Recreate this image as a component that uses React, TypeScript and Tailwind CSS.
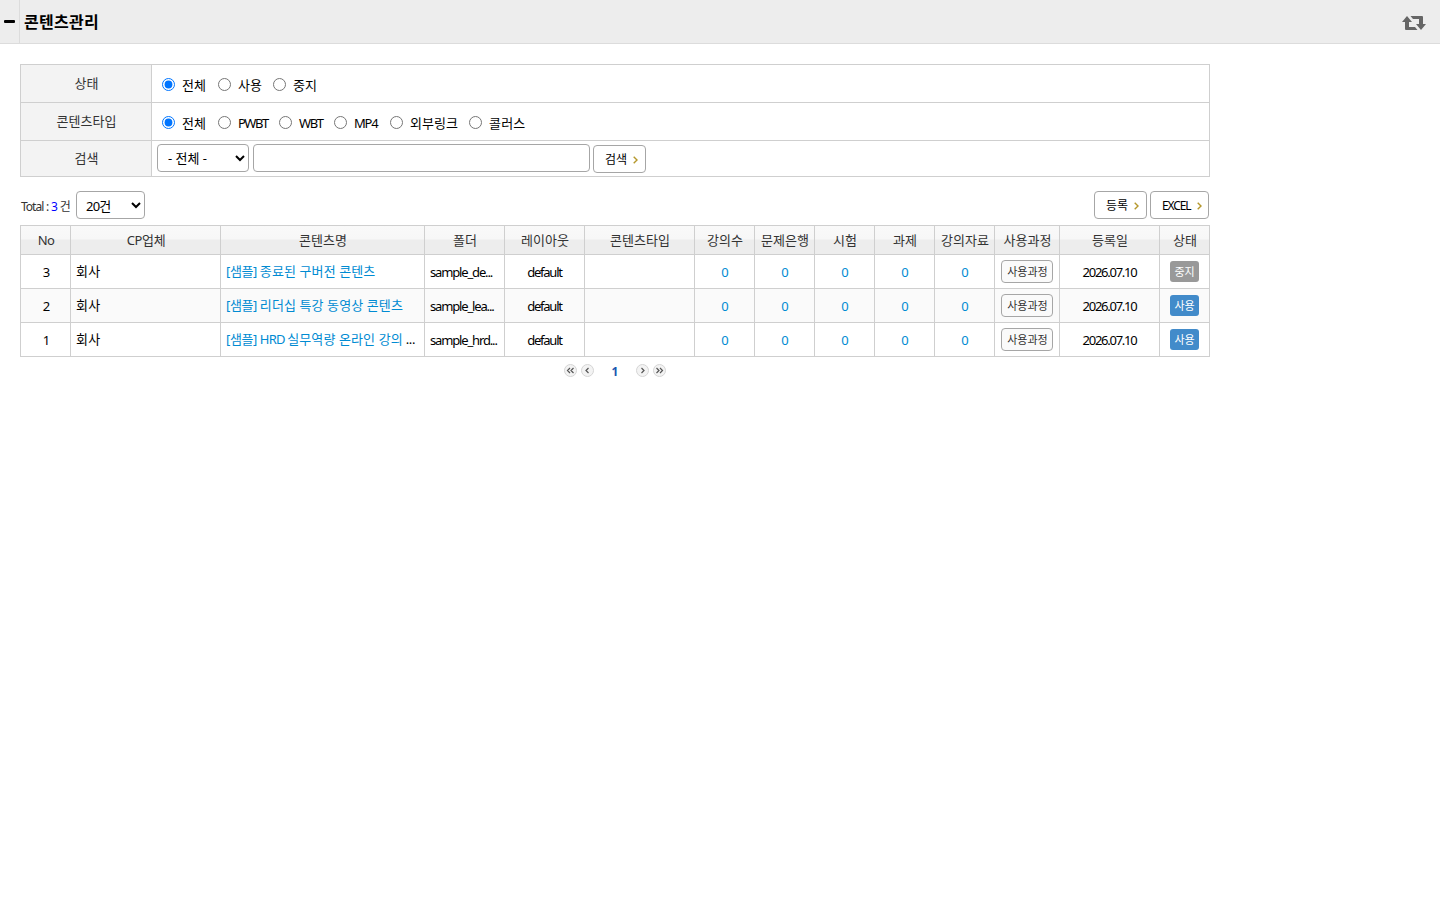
import React from "react";

type Option = { label: string; style: string };

const statusOptions: Option[] = [
  { label: "전체", style: "w-[56px]" },
  { label: "사용", style: "w-[55px]" },
  { label: "중지", style: "w-[55px]" },
];

const typeOptions: Option[] = [
  { label: "전체", style: "w-[56px]" },
  { label: "PWBT", style: "w-[61px] tracking-[-1.5px]" },
  { label: "WBT", style: "w-[55px] tracking-[-1.4px]" },
  { label: "MP4", style: "w-[56px] tracking-[-1.2px]" },
  { label: "외부링크", style: "w-[79px]" },
  { label: "콜러스", style: "w-[70px] tracking-[0.2px]" },
];

const columns = [
  { label: "No", width: "w-[50px] tracking-[-0.5px]" },
  { label: "CP업체", width: "w-[150px] tracking-[-0.4px]" },
  { label: "콘텐츠명", width: "w-[204px]" },
  { label: "폴더", width: "w-[80px]" },
  { label: "레이아웃", width: "w-[80px]" },
  { label: "콘텐츠타입", width: "w-[110px]" },
  { label: "강의수", width: "w-[60px]" },
  { label: "문제은행", width: "w-[60px]" },
  { label: "시험", width: "w-[60px]" },
  { label: "과제", width: "w-[60px]" },
  { label: "강의자료", width: "w-[60px]" },
  { label: "사용과정", width: "w-[65px]" },
  { label: "등록일", width: "w-[100px]" },
  { label: "상태", width: "w-[50px]" },
];

const rows = [
  { no: 3, prefix: "", title: "종료된 구버전 콘텐츠", cut: false, folder: "sample_de...", active: false },
  { no: 2, prefix: "", title: "리더십 특강 동영상 콘텐츠", cut: false, folder: "sample_lea...", active: true },
  { no: 1, prefix: "HRD ", title: "실무역량 온라인 강의", cut: true, folder: "sample_hrd...", active: true },
];

function RadioRow({ name, options }: { name: string; options: Option[] }) {
  return (
    <div className="flex items-center pt-[2px] pl-[10px]">
      {options.map((o, i) => (
        <label key={o.label} className={`flex items-center whitespace-nowrap ${o.style}`}>
          <input type="radio" name={name} defaultChecked={i === 0} className="mr-[7px] size-[13px] shrink-0" />
          {o.label}
        </label>
      ))}
    </div>
  );
}

function FilterRow({ label, height, children }: { label: string; height: string; children: React.ReactNode }) {
  return (
    <div className={`flex border-b border-[#cfcfcf] ${height}`}>
      <div className="flex w-[131px] items-center justify-center border-r border-[#cfcfcf] bg-[#f3f3f3] pb-[2px] pl-px text-[#333]">
        {label}
      </div>
      {children}
    </div>
  );
}

function ArrowButton({ label, style }: { label: string; style: string }) {
  return (
    <button className={`flex h-[28px] items-center rounded-[4px] border border-[#a6a6a6] bg-white pl-[11px] text-[12px] ${style}`}>
      <span className="pt-[2px]">{label}</span>
      <svg className="mt-px ml-[6px] h-[8px] w-[5px]" viewBox="0 0 5 8" fill="none" stroke="#b5982c" strokeWidth="1.4">
        <path d="M0.7 0.7L4 4L0.7 7.3" />
      </svg>
    </button>
  );
}

function PageIcon({ d }: { d: string }) {
  return (
    <svg className="size-[13px]" viewBox="0 0 13 13" fill="none">
      <circle cx="6.5" cy="6.5" r="6" fill="#f3f3f3" stroke="#d4d4d4" />
      <path d={d} stroke="#555" strokeWidth="1.2" />
    </svg>
  );
}

const cell = "flex shrink-0 items-center border-r border-[#cfcfcf]";

export default function App() {
  return (
    <div className="h-[900px] w-[1440px] overflow-hidden bg-white font-['Noto_Sans','Noto_Sans_CJK_KR',sans-serif] text-[13px] leading-[18px] text-black">
      <header className="flex h-[44px] border-b border-[#dcdcdc] bg-[#ededed]">
        <div className="flex w-[20px] border-r border-[#dcdcdc] pt-[20px] pl-[4px]">
          <div className="h-[3px] w-[11px] rounded-[1px] bg-black" />
        </div>
        <h1 className="flex items-center pl-[4px] text-[16px] font-bold tracking-[0.3px]">콘텐츠관리</h1>
        <svg className="mt-[16px] mr-[14px] ml-auto h-[14px] w-[24px]" viewBox="0 0 24 14" fill="#666">
          <path d="M5 0L10 6H7V11H13L15.5 14H4Q3 14 3 13V6H0Z" />
          <path d="M19 14L14 8H17V3H11L8.500 0H20Q21 0 21 1V8H24Z" />
        </svg>
      </header>

      <main className="ml-[20px] w-[1190px] pt-[20px]">
        <section className="border-x border-t border-[#cfcfcf]">
          <FilterRow label="상태" height="h-[38px]">
            <RadioRow name="status" options={statusOptions} />
          </FilterRow>
          <FilterRow label="콘텐츠타입" height="h-[38px]">
            <RadioRow name="type" options={typeOptions} />
          </FilterRow>
          <FilterRow label="검색" height="h-[36px]">
            <div className="flex items-start pt-[3px] pl-[5px]">
              <select className="h-[28px] w-[92px] rounded-[4px] border border-[#a6a6a6] bg-white pl-[6px]">
                <option>- 전체 -</option>
              </select>
              <input className="ml-[4px] h-[28px] w-[337px] rounded-[4px] border border-[#a6a6a6] px-2" />
              <div className="pt-px pl-[3px]">
                <ArrowButton label="검색" style="w-[53px]" />
              </div>
            </div>
          </FilterRow>
        </section>

        <div className="mt-[14px] flex h-[34px] items-start">
          <div className="mt-[7px] ml-px w-[55px] text-[12px] tracking-[-1px] whitespace-nowrap text-[#333] [word-spacing:0.7px]">
            Total : <span className="text-[#0000ff]">3</span> 건
          </div>
          <select className="h-[28px] w-[69px] rounded-[4px] border border-[#a6a6a6] bg-white pt-px pl-[5px] tracking-[-0.8px]">
            <option>20건</option>
          </select>
          <div className="mr-px ml-auto flex gap-[3px]">
            <ArrowButton label="등록" style="w-[53px]" />
            <ArrowButton label="EXCEL" style="w-[59px] tracking-[-1.1px]" />
          </div>
        </div>

        <section className="border-t border-l border-[#cfcfcf]">
          <div className="flex h-[29px] border-b border-[#cfcfcf] bg-[linear-gradient(#f9f9f9_0,#f7f7f7_13px,#ededed_14px,#ededed_100%)] text-[#333]">
            {columns.map((c) => (
              <div key={c.label} className={`${cell} ${c.width} justify-center pl-px whitespace-nowrap`}>
                {c.label}
              </div>
            ))}
          </div>
          {rows.map((r) => (
            <div key={r.no} className={`flex h-[34px] border-b border-[#cfcfcf] ${r.no === 2 ? "bg-[#fafafa]" : "bg-white"}`}>
              <div className={`${cell} w-[50px] justify-center pt-px pl-[2px]`}>{r.no}</div>
              <div className={`${cell} w-[150px] pb-px pl-[5px] tracking-[0.2px]`}>회사</div>
              <div className={`${cell} w-[204px] pb-px pl-[5px] whitespace-pre`}>
                <a className="text-[#008bd2]">
                  <span className="tracking-[-0.4px]">[샘플] </span>
                  <span className="tracking-[-0.8px]">{r.prefix}</span>
                  <span className="tracking-[0.1px]">{r.title}</span>
                </a>
                {r.cut && <span className="tracking-[-0.4px]"> ...</span>}
              </div>
              <div className={`${cell} w-[80px] pt-px pl-[5px] tracking-[-1.15px]`}>{r.folder}</div>
              <div className={`${cell} w-[80px] justify-center pt-px tracking-[-1.25px]`}>default</div>
              <div className={`${cell} w-[110px]`} />
              {[0, 0, 0, 0, 0].map((n, i) => (
                <div key={i} className={`${cell} w-[60px] justify-center pt-px pl-px text-[#008bd2]`}>{n}</div>
              ))}
              <div className={`${cell} w-[65px] items-start pt-[5px] pl-[6px]`}>
                <button className="h-[23px] w-[52px] rounded-[4px] border border-[#a6a6a6] bg-[#fafafa] pl-px text-[11px] leading-[22px] whitespace-nowrap text-[#333]">
                  사용과정
                </button>
              </div>
              <div className={`${cell} w-[100px] justify-center pt-px tracking-[-1.25px]`}>2026.07.10</div>
              <div className={`${cell} w-[50px] justify-center`}>
                <span className={`h-[21px] w-[29px] rounded-[3px] text-center text-[11px] leading-[22px] text-white ${r.active ? "bg-[#428bca]" : "bg-[#999999]"}`}>
                  {r.active ? "사용" : "중지"}
                </span>
              </div>
            </div>
          ))}
        </section>

        <nav className="flex h-[27px] items-center justify-center">
          <PageIcon d="M6 4L3.500 6.500L6 9M9.500 4L7 6.500L9.500 9" />
          <div className="w-[4px]" />
          <PageIcon d="M7.500 4L5 6.500L7.500 9" />
          <b className="w-[42px] pt-[2px] text-center font-['Noto_Sans'] text-[12px] text-[#1a56b0]">1</b>
          <PageIcon d="M5.500 4L8 6.500L5.500 9" />
          <div className="w-[4px]" />
          <PageIcon d="M3.500 4L6 6.500L3.500 9M7 4L9.500 6.500L7 9" />
        </nav>
      </main>
    </div>
  );
}
